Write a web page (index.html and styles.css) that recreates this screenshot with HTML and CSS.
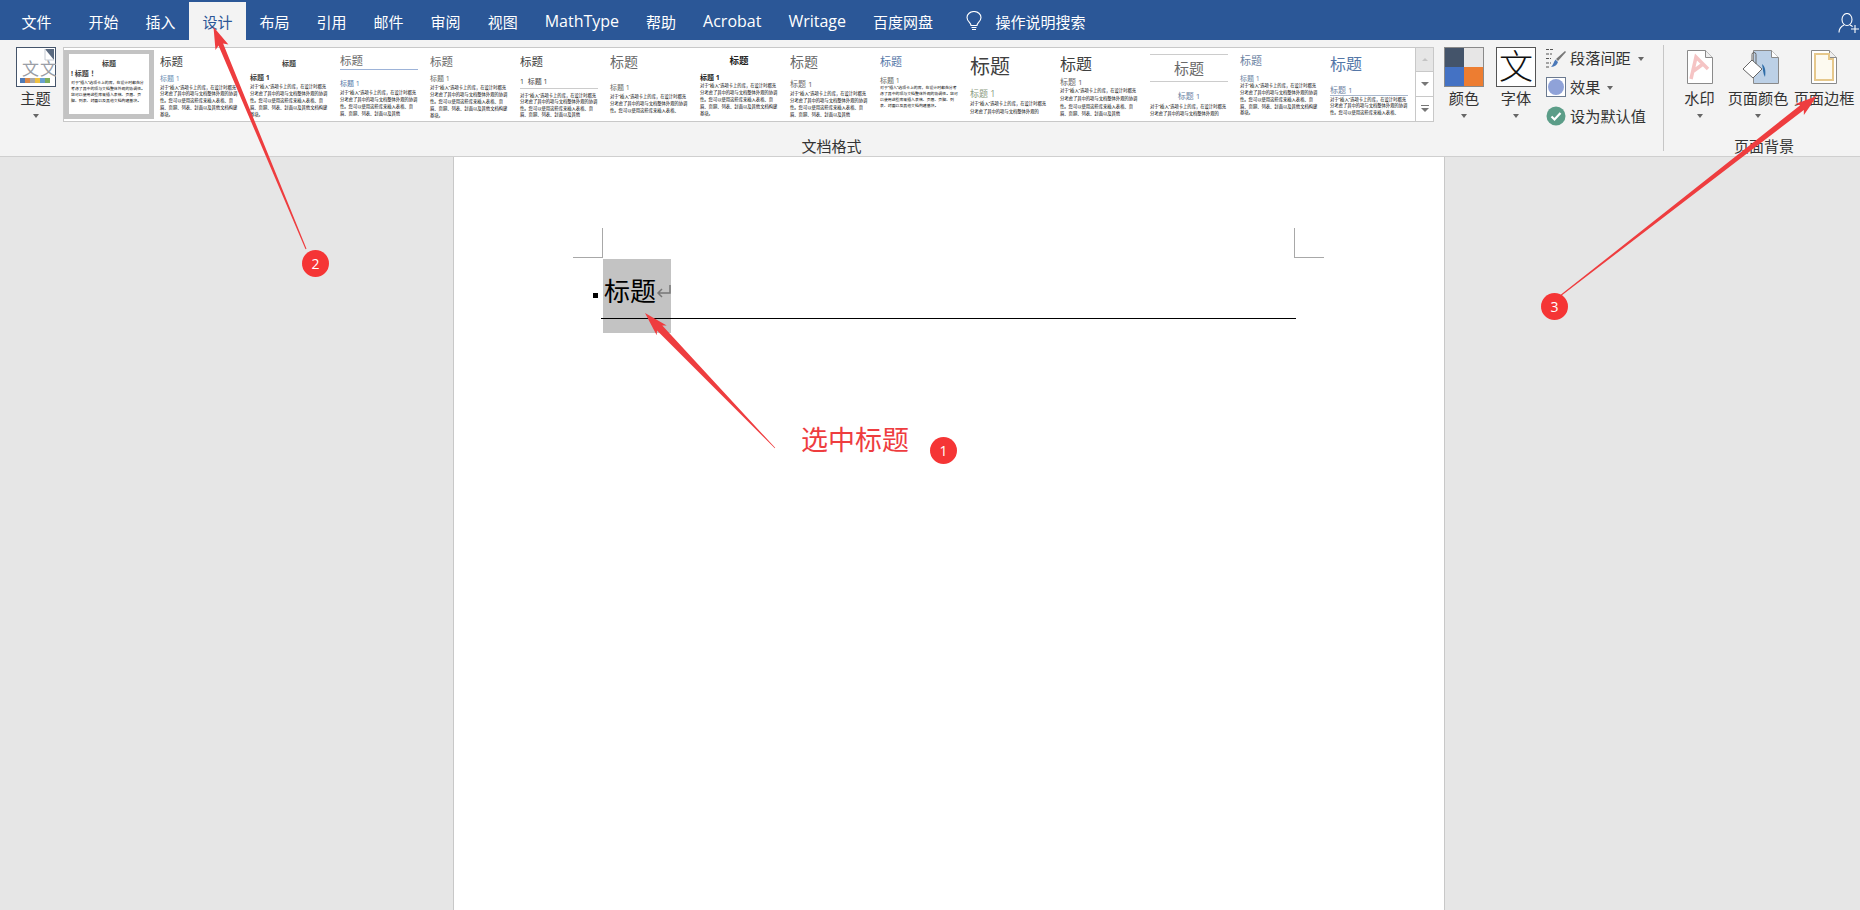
FILE: index.html
```html
<!DOCTYPE html>
<html lang="zh-CN">
<head>
  <meta charset="UTF-8">
  <title>文档 - Word</title>
  <link rel="stylesheet" href="styles.css">
</head>
<body>
  <header class="tabbar">
    <a class="tab tab-file">文件</a>
    <a class="tab">开始</a>
    <a class="tab">插入</a>
    <a class="tab active">设计</a>
    <a class="tab">布局</a>
    <a class="tab">引用</a>
    <a class="tab">邮件</a>
    <a class="tab">审阅</a>
    <a class="tab">视图</a>
    <a class="tab tab-latin">MathType</a>
    <a class="tab">帮助</a>
    <a class="tab tab-latin">Acrobat</a>
    <a class="tab tab-latin">Writage</a>
    <a class="tab">百度网盘</a>
    <div class="search">
      <svg width="16" height="20" viewBox="0 0 16 20" fill="none" stroke="#fff" stroke-width="1.1">
        <path d="M5 14.5C5 11.5 1 10.5 1 6.5a7 6 0 0 1 14 0c0 4-4 5-4 8z"/>
        <path d="M5.5 16.5h5M6 18.5h4"/>
      </svg>
      <span>操作说明搜索</span>
    </div>
    <svg class="user" width="22" height="20" viewBox="0 0 22 20" fill="none" stroke="#fff" stroke-width="1.1">
      <ellipse cx="9" cy="6.5" rx="5" ry="6"/>
      <path d="M1 19.5c0-4 3-6.5 5-7.5M12 12c1 .4 2 1 2.6 1.6"/>
      <path d="M17 12v8M13 16h8"/>
    </svg>
  </header>

  <section class="ribbon">
    <div class="group group-format">
      <div class="group-body">
        <div class="big-btn btn-theme">
          <svg class="icon40" width="40" height="40" viewBox="0 0 40 40">
            <rect x=".5" y=".5" width="39" height="39" fill="#fff" stroke="#44546a"/>
            <path d="M29 2h9v11z" fill="#5a6a80"/>
            <path d="M29 2v11h9" fill="none" stroke="#c5cad2"/>
            <text x="6" y="28" class="theme-char">文</text>
            <text x="24" y="28" class="theme-char">文</text>
            <rect x="4" y="31" width="5" height="5" fill="#4e79b5"/>
            <rect x="9" y="31" width="5" height="5" fill="#d98a4a"/>
            <rect x="14" y="31" width="5" height="5" fill="#a8a8a8"/>
            <rect x="19" y="31" width="5" height="5" fill="#eec040"/>
            <rect x="24" y="31" width="5" height="5" fill="#68a0d0"/>
            <rect x="29" y="31" width="5" height="5" fill="#7dae5c"/>
          </svg>
          <span>主题</span>
          <i class="caret"></i>
        </div>

        <div class="gallery">
          <div class="gallery-items">
            <div class="item item-selected v1">
              <div class="t">标题</div>
              <div class="s">! 标题 ！</div>
              <p class="p">对于“插入”选项卡上的库，在设计时都充分考虑了其中的项与文档整体外观的协调性。您可以使用这些库来插入表格、页眉、页脚、列表、封面以及其他文档构建基块。</p>
            </div>
            <div class="item v2">
              <div class="t">标题</div>
              <div class="s">标题 1</div>
              <p class="p">对于“插入”选项卡上的库，在设计时都充分考虑了其中的项与文档整体外观的协调性。您可以使用这些库来插入表格、页眉、页脚、列表、封面以及其他文档构建基块。</p>
            </div>
            <div class="item v3">
              <div class="t">标题</div>
              <div class="s">标题 1</div>
              <p class="p">对于“插入”选项卡上的库，在设计时都充分考虑了其中的项与文档整体外观的协调性。您可以使用这些库来插入表格、页眉、页脚、列表、封面以及其他文档构建基块。</p>
            </div>
            <div class="item v4">
              <div class="t">标题</div>
              <div class="s">标题 1</div>
              <p class="p">对于“插入”选项卡上的库，在设计时都充分考虑了其中的项与文档整体外观的协调性。您可以使用这些库来插入表格、页眉、页脚、列表、封面以及其他</p>
            </div>
            <div class="item v5">
              <div class="t">标题</div>
              <div class="s">标题 1</div>
              <p class="p">对于“插入”选项卡上的库，在设计时都充分考虑了其中的项与文档整体外观的协调性。您可以使用这些库来插入表格、页眉、页脚、列表、封面以及其他文档构建基块。</p>
            </div>
            <div class="item v6">
              <div class="t">标题</div>
              <div class="s">1&nbsp; 标题 1</div>
              <p class="p">对于“插入”选项卡上的库，在设计时都充分考虑了其中的项与文档整体外观的协调性。您可以使用这些库来插入表格、页眉、页脚、列表、封面以及其他</p>
            </div>
            <div class="item v7">
              <div class="t">标题</div>
              <div class="s">标题 1</div>
              <p class="p">对于“插入”选项卡上的库，在设计时都充分考虑了其中的项与文档整体外观的协调性。您可以使用这些库来插入表格、</p>
            </div>
            <div class="item v8">
              <div class="t">标题</div>
              <div class="s">标题 1</div>
              <p class="p">对于“插入”选项卡上的库，在设计时都充分考虑了其中的项与文档整体外观的协调性。您可以使用这些库来插入表格、页眉、页脚、列表、封面以及其他文档构建基块。</p>
            </div>
            <div class="item v9">
              <div class="t">标题</div>
              <div class="s">标题 1</div>
              <p class="p">对于“插入”选项卡上的库，在设计时都充分考虑了其中的项与文档整体外观的协调性。您可以使用这些库来插入表格、页眉、页脚、列表、封面以及其他</p>
            </div>
            <div class="item v10">
              <div class="t">标题</div>
              <div class="s">标题 1</div>
              <p class="p">对于“插入”选项卡上的库，在设计时都充分考虑了其中的项与文档整体外观的协调性。您可以使用这些库来插入表格、页眉、页脚、列表、封面以及其他文档构建基块。</p>
            </div>
            <div class="item v11">
              <div class="t">标题</div>
              <div class="s">标题 1</div>
              <p class="p">对于“插入”选项卡上的库，在设计时都充分考虑了其中的项与文档整体外观的</p>
            </div>
            <div class="item v12">
              <div class="t">标题</div>
              <div class="s">标题 1</div>
              <p class="p">对于“插入”选项卡上的库，在设计时都充分考虑了其中的项与文档整体外观的协调性。您可以使用这些库来插入表格、页眉、页脚、列表、封面以及其他</p>
            </div>
            <div class="item v13">
              <div class="t">标题</div>
              <div class="s">标题 1</div>
              <p class="p">对于“插入”选项卡上的库，在设计时都充分考虑了其中的项与文档整体外观的</p>
            </div>
            <div class="item v14">
              <div class="t">标题</div>
              <div class="s">标题 1</div>
              <p class="p">对于“插入”选项卡上的库，在设计时都充分考虑了其中的项与文档整体外观的协调性。您可以使用这些库来插入表格、页眉、页脚、列表、封面以及其他文档构建基块。</p>
            </div>
            <div class="item v15">
              <div class="t">标题</div>
              <div class="s">标题 1</div>
              <p class="p">对于“插入”选项卡上的库，在设计时都充分考虑了其中的项与文档整体外观的协调性。您可以使用这些库来插入表格、</p>
            </div>
          </div>
          <div class="gallery-scroll">
            <div class="scroll-btn scroll-up"><i class="tri-up"></i></div>
            <div class="scroll-btn"><i class="tri-down"></i></div>
            <div class="scroll-btn scroll-more"><i class="bar"></i><i class="tri-down"></i></div>
          </div>
        </div>

        <div class="big-btn btn-small">
          <div class="swatch icon40">
            <i class="sw1"></i><i class="sw2"></i><i class="sw3"></i><i class="sw4"></i>
          </div>
          <span>颜色</span>
          <i class="caret"></i>
        </div>
        <div class="big-btn btn-small">
          <div class="font-box icon40">文</div>
          <span>字体</span>
          <i class="caret"></i>
        </div>

        <div class="stack">
          <div class="stack-row">
            <svg width="20" height="20" viewBox="0 0 20 20" fill="none">
              <path d="M0 1.5h8M0 6h6M0 10.500h5M0 15h5M0 19h4" stroke="#555" stroke-dasharray="3 1"/>
              <path d="M19 3l1 1-8 9-2-2z" fill="#777"/>
              <path d="M9.500 11.500l2.500 2.500c-1 3-3 4.500-7 5 2-1.500 2.500-5 4.500-7.500z" fill="#4a78b8"/>
            </svg>
            <span>段落间距</span><i class="caret caret-in"></i>
          </div>
          <div class="stack-row">
            <div class="effect-box"><i></i></div>
            <span>效果</span><i class="caret caret-in"></i>
          </div>
          <div class="stack-row">
            <svg width="20" height="20" viewBox="0 0 20 20">
              <circle cx="10" cy="10" r="9.500" fill="#5b9d88"/>
              <path d="M5.500 10.500l3 3 6-6.500" fill="none" stroke="#fff" stroke-width="2.200"/>
            </svg>
            <span>设为默认值</span>
          </div>
        </div>
      </div>
      <div class="group-label">文档格式</div>
    </div>

    <div class="group group-bg">
      <div class="group-body">
        <div class="big-btn btn-water">
          <svg class="doc" width="28" height="36" viewBox="0 0 28 36">
            <path d="M1.500 1.500h18l7 7v26h-25z" fill="#fff" stroke="#8a8a8a"/>
            <path d="M19.500 1.500v7h7" fill="#eee" stroke="#8a8a8a"/>
            <path d="M5 30L10 8l12 12M7.500 22L17 15" fill="none" stroke="#f5c4c4" stroke-width="3.500"/>
          </svg>
          <span>水印</span>
          <i class="caret"></i>
        </div>
        <div class="big-btn btn-wide">
          <svg class="doc doc-paint" width="38" height="36" viewBox="0 0 38 36">
            <path d="M11.500 1.500h18l7 7v26h-25z" fill="#bcd0e6" stroke="#8a8a8a"/>
            <path d="M29.500 1.500v7h7" fill="#fff" stroke="#8a8a8a"/>
            <path d="M10 11l10 9-9 9-10-9z" fill="#fff" stroke="#666"/>
            <path d="M10 11V5.500a2 2 0 0 1 4 0V15" fill="none" stroke="#666"/>
            <path d="M20 15c3 2 4 7 3 13-2-3-2-8-3-13z" fill="#2f6da8"/>
          </svg>
          <span>页面颜色</span>
          <i class="caret"></i>
        </div>
        <div class="big-btn btn-wide">
          <svg class="doc" width="28" height="36" viewBox="0 0 28 36">
            <path d="M1.500 1.500h18l7 7v26h-25z" fill="#fff" stroke="#8a8a8a"/>
            <path d="M19.500 1.500v7h7" fill="#eee" stroke="#8a8a8a"/>
            <path d="M5 5h14v5h4v21H5z" fill="#fdfaf0" stroke="#e6c88c" stroke-width="2"/>
          </svg>
          <span>页面边框</span>
        </div>
      </div>
      <div class="group-label">页面背景</div>
    </div>
  </section>

  <main class="canvas">
    <div class="page">
      <div class="crop-row">
        <div class="crop crop-left"></div>
        <div class="crop crop-right"></div>
      </div>
      <div class="heading">
        <i class="bullet"></i>
        <div class="selection">
          <span>标题</span>
          <svg width="15" height="15" viewBox="0 0 15 15" fill="none" stroke="#777" stroke-width="1.500">
            <path d="M14 1v8H2M6 5L2 9l4 4"/>
          </svg>
        </div>
      </div>
    </div>
  </main>

  <!-- annotations drawn over the screenshot -->
  <svg class="marks" width="1860" height="910" viewBox="0 0 1860 910">
    <polygon points="645,313 666.700,325.400 662.300,325.600 775.200,447.800 774.800,448.200 657,330.600 656.700,335.200"/>
    <polygon points="213.500,27 228.400,44.600 223.100,43.500 306.500,248.800 305.500,249.200 218.500,45.500 215.500,50"/>
    <polygon points="1817,96 1803.900,115 1803.800,110.100 1560.300,296.400 1559.700,295.600 1800.200,105.300 1795.300,104"/>
  </svg>
  <div class="note">选中标题</div>
  <div class="badge badge-1">1</div>
  <div class="badge badge-2">2</div>
  <div class="badge badge-3">3</div>
</body>
</html>
```

FILE: styles.css
```css
* {
  box-sizing: border-box;
}
html, body {
  margin: 0;
  height: 100%;
}
body {
  display: flex;
  flex-direction: column;
  width: 1860px;
  height: 910px;
  overflow: hidden;
  position: relative;
  background-color: #e6e6e6;
  font-family: "Open Sans", "Noto Sans CJK SC", sans-serif;
  color: #333;
}

/* top tabs */
.tabbar {
  display: flex;
  align-items: flex-end;
  height: 40px;
  padding-left: 8px;
  background-color: #2b5797;
  color: #fff;
  font-size: 15px;
}
.tab {
  display: flex;
  align-items: center;
  height: 38px;
  padding: 0 13.5px;
}
.tab-latin {
  font-size: 16px;
}
.tab-file {
  margin-right: 10px;
}
.tab.active {
  background-color: #f3f3f3;
  color: #2b5797;
}
.search {
  display: flex;
  align-items: center;
  gap: 14px;
  height: 38px;
  margin-left: 19px;
}
.user {
  margin: 0 0 7px auto;
  align-self: flex-end;
}

/* ribbon */
.ribbon {
  display: flex;
  height: 117px;
  background-color: #f3f3f3;
  border-bottom: 1px solid #cfcfcf;
  font-size: 15.200px;
}
.group {
  display: flex;
  flex-direction: column;
  padding-top: 7px;
}
.group-format {
  width: 1663px;
  padding-left: 8px;
}
.group-bg {
  position: relative;
  flex: 1;
  padding-left: 11px;
}
.group-bg::before {
  content: "";
  position: absolute;
  left: 0;
  top: 5px;
  bottom: 5px;
  width: 1px;
  background-color: #c6c6c6;
}
.group-body {
  display: flex;
  height: 89px;
}
.group-label {
  text-align: center;
  font-size: 15px;
  line-height: 20px;
}
.group-format .group-label {
  margin-left: -8px;
}
.group-bg .group-label {
  margin-left: -6px;
}
.big-btn {
  display: flex;
  flex-direction: column;
  align-items: center;
  line-height: 20px;
}
.big-btn span {
  margin-top: 1px;
}
.icon40 {
  flex: none;
  width: 40px;
  height: 40px;
}
.btn-theme {
  width: 55px;
}
.btn-small {
  width: 52px;
}
.btn-water {
  width: 51px;
}
.btn-wide {
  width: 66px;
}
.theme-char {
  font-size: 17px;
  fill: #9a9ea6;
}
.caret {
  width: 0;
  height: 0;
  margin-top: 6px;
  border-left: 3.5px solid transparent;
  border-right: 3.5px solid transparent;
  border-top: 4px solid #666;
}
.caret-in {
  margin: 2px 0 0 3px;
}

/* style gallery */
.gallery {
  display: flex;
  width: 1371px;
  height: 75px;
  margin-right: 4px;
  background-color: #fff;
  border: 1px solid #c8c8c8;
}
.gallery-items {
  display: flex;
  flex: 1;
}
.item {
  flex: none;
  width: 90px;
  margin-top: 6px;
  padding: 0 6px;
  color: #404040;
}
.item-selected {
  height: 69px;
  margin-top: 2px;
  padding: 0 2px;
  background-color: #fff;
  border-style: solid;
  border-color: #c3c3c3;
  border-width: 4px 5px 5px;
}
.t {
  font-size: 11.500px;
  line-height: 16px;
}
.s {
  font-size: 7px;
  line-height: 8px;
  white-space: nowrap;
}
.p {
  margin: 0;
  font-size: 4.300px;
  line-height: 7px;
  color: #000;
}
/* the fifteen style sets, each with its own title and heading look */
.v1 .t, .v3 .t { font-size: 7px; font-weight: 700; text-align: center; }
.v1 .t { margin-top: 2px; }
.v1 .s { margin-top: -2px; font-weight: 700; }
.v1 .p { margin-top: 2px; font-size: 3.900px; line-height: 6px; }
.v2 .s { margin-top: 5px; color: #6d8fb5; }
.v2 .p { margin-top: .6px; line-height: 6.800px; }
.v3 .t { margin-top: 2px; }
.v3 .s { margin-top: 2px; font-weight: 700; }
.v3 .p { margin-top: .5px; }
.v4 .t { margin-top: -1px; color: #6a6a6a; border-bottom: 1px solid #9db3d8; }
.v4 .s { margin-top: 10px; color: #5577a8; }
.v4 .p { margin-top: .5px; }
.v5 .t, .v5 .s { color: #6a6a6a; }
.v5 .s { margin-top: 5px; }
.v5 .p { margin-top: .5px; }
.v6 .s { margin-top: 8px; padding-bottom: 2px; border-bottom: 1px solid #ccc; box-sizing: content-box; }
.v6 .p { margin-top: 2.700px; line-height: 6.500px; }
.v7 .t, .v7 .s { color: #6a6a6a; }
.v7 .t { font-size: 14px; }
.v7 .s { margin-top: 14px; }
.v7 .p { margin-top: .5px; }
.v8 .t { margin-top: -1px; font-size: 9.500px; font-weight: 700; text-align: center; color: #222; }
.v8 .s { margin-top: 5px; font-weight: 700; color: #222; }
.v8 .p { margin-top: -.5px; }
.v9 .t { font-size: 14px; color: #6a6a6a; }
.v9 .s { margin-top: 10px; font-size: 8px; color: #6a6a6a; }
.v9 .p { margin-top: 1.500px; }
.v10 .t { font-size: 11px; color: #5577a8; }
.v10 .s { margin-top: 7px; color: #6a6a6a; }
.v10 .p { font-size: 3.900px; line-height: 6px; }
.v11 .t { margin-top: 5px; font-size: 20px; }
.v11 .s { margin-top: 15px; font-size: 9px; color: #8a9a80; }
.v11 .p { margin-top: 1px; line-height: 8px; }
.v12 .t { margin-top: 2px; font-size: 16px; }
.v12 .s { margin-top: 6px; font-size: 8px; color: #6a6a6a; }
.v12 .p { margin-top: 1.100px; line-height: 7.700px; }
.v13 .t {
  height: 28px;
  font-size: 15px;
  line-height: 26px;
  text-align: center;
  color: #6a6a6a;
  border-top: 1px solid #ccc;
  border-bottom: 1px solid #ccc;
}
.v13 .s { margin-top: 10px; font-size: 8px; text-align: center; color: #6c83a3; }
.v13 .p { margin-top: 2.500px; }
.v14 .t { margin-top: -1px; font-size: 11px; color: #6c83a3; }
.v14 .s { margin-top: 6px; color: #6c83a3; }
.v14 .p { margin-top: -.9px; line-height: 6.800px; }
.v15 .t { margin-top: 2px; font-size: 16px; color: #5577a8; }
.v15 .s { margin-top: 14px; padding-bottom: 1px; font-size: 8px; color: #6c83a3; border-bottom: 1px solid #a9b8cd; box-sizing: content-box; }
.v15 .p { line-height: 6.300px; }

.gallery-scroll {
  display: flex;
  flex-direction: column;
  flex: none;
  width: 18px;
  border-left: 1px solid #c8c8c8;
}
.scroll-btn {
  display: flex;
  flex-direction: column;
  align-items: center;
  justify-content: center;
  gap: 2px;
  height: 24.300px;
  border-bottom: 1px solid #c8c8c8;
}
.scroll-btn:last-child {
  border-bottom: 0;
}
.scroll-up {
  background-color: #e6e6e6;
}
.tri-up {
  border-left: 3px solid transparent;
  border-right: 3px solid transparent;
  border-bottom: 3px solid #c4c4c4;
}
.tri-down {
  border-left: 4px solid transparent;
  border-right: 4px solid transparent;
  border-top: 4px solid #777;
}
.bar {
  width: 8px;
  height: 1px;
  background-color: #777;
}

/* colours and fonts */
.swatch {
  display: grid;
  grid-template-columns: 1fr 1fr;
  border: 1px solid #8a8a8a;
}
.sw1 { background-color: #44546a; }
.sw2 { background-color: #e7e6e6; }
.sw3 { background-color: #4472c4; }
.sw4 { background-color: #ed7d31; }
.font-box {
  background-color: #fff;
  border: 1px solid #555;
  color: #111;
  font-size: 34px;
  font-weight: 300;
  line-height: 36px;
  text-align: center;
}
.stack {
  display: flex;
  flex-direction: column;
  gap: 9px;
  margin-left: 4px;
  margin-top: 1px;
}
.stack-row {
  display: flex;
  align-items: center;
  gap: 4px;
  height: 20px;
  line-height: 20px;
}
.stack-row svg {
  flex: none;
}
.effect-box {
  display: flex;
  align-items: center;
  justify-content: center;
  width: 20px;
  height: 20px;
  background-color: #fff;
  border: 1px solid #6b7a90;
}
.effect-box i {
  width: 16px;
  height: 16px;
  border-radius: 50%;
  background-color: #8fa2d8;
}

/* page background icons */
.doc {
  flex: none;
  height: 36px;
  margin: 2px 0;
}
.doc-paint {
  margin-left: 5px;
}

/* document */
.canvas {
  flex: 1;
  padding-left: 453px;
}
.page {
  width: 992px;
  height: 100%;
  padding: 71px 120px 0 119px;
  background-color: #fff;
  border-left: 1px solid #c8c8c8;
  border-right: 1px solid #c8c8c8;
}
.crop-row {
  display: flex;
  justify-content: space-between;
}
.crop {
  width: 30px;
  height: 30px;
  border-bottom: 1px solid #a8a8a8;
}
.crop-left {
  border-right: 1px solid #a8a8a8;
}
.crop-right {
  border-left: 1px solid #a8a8a8;
}
.heading {
  position: relative;
  display: flex;
  height: 60px;
  margin: 1px 28px 0;
  padding-left: 2px;
  color: #000;
}
.heading::after {
  content: "";
  position: absolute;
  left: 0;
  right: 0;
  bottom: 0;
  height: 1px;
  background-color: #000;
}
.bullet {
  flex: none;
  width: 5px;
  height: 5px;
  margin: 34px 5px 0 -10px;
  background-color: #000;
}
.selection {
  display: flex;
  align-items: center;
  flex: none;
  width: 68px;
  height: 74px;
  padding-bottom: 10px;
  background-color: #c3c3c3;
  font-size: 26px;
}
.selection span {
  margin-left: 1px;
  line-height: 30px;
}
.selection svg {
  flex: none;
}

/* annotations */
.marks {
  position: absolute;
  left: 0;
  top: 0;
  pointer-events: none;
}
.marks polygon {
  fill: #ee3d3f;
}
.note {
  position: absolute;
  left: 801px;
  top: 420px;
  color: #ee3d3f;
  font-size: 27px;
  line-height: 40px;
}
.badge {
  position: absolute;
  width: 27px;
  height: 27px;
  border-radius: 50%;
  background-color: #f53535;
  color: #fff;
  font-size: 14px;
  line-height: 27px;
  text-align: center;
}
.badge-1 { left: 930px; top: 437px; }
.badge-2 { left: 302px; top: 250px; }
.badge-3 { left: 1541px; top: 293px; }
```
